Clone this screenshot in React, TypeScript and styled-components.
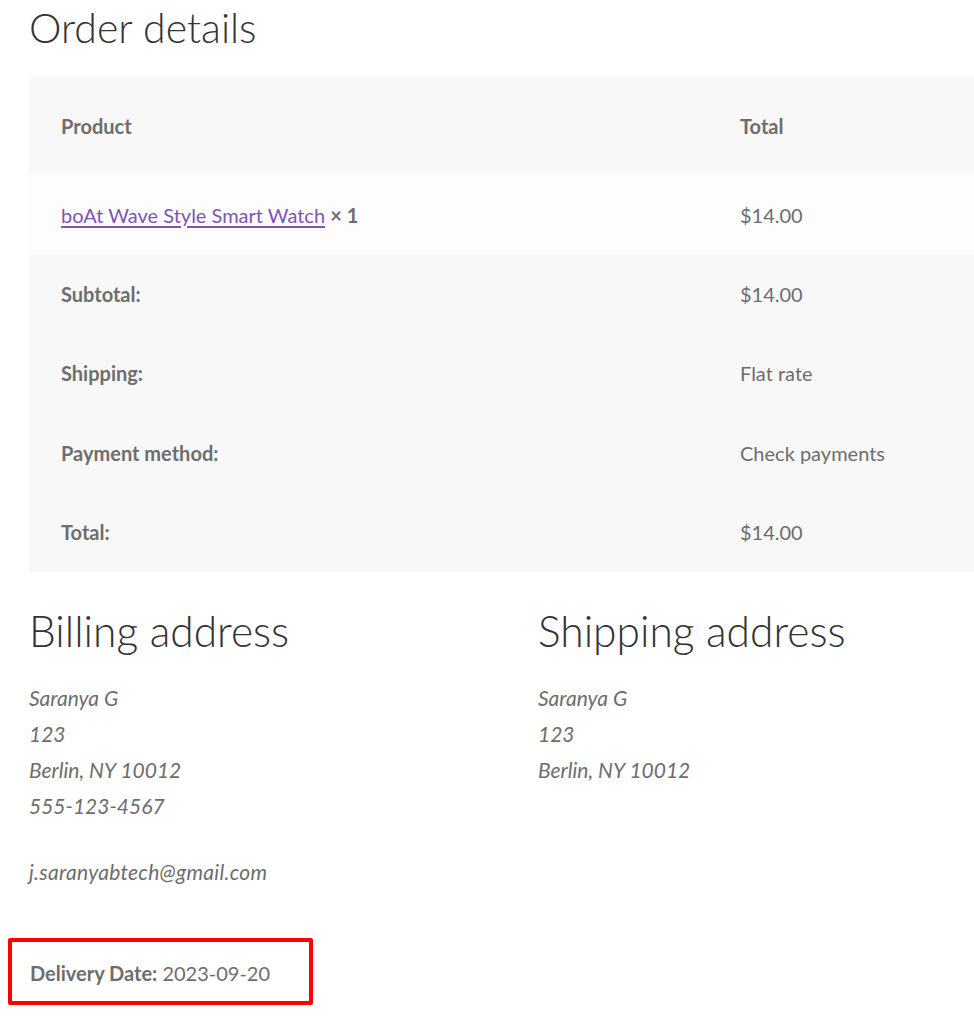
import { createGlobalStyle, styled } from 'styled-components';

const GlobalStyle = createGlobalStyle`
  body {
    margin: 0;
    background: #ffffff;
    font-family: Lato, "Noto Sans", sans-serif;
    color: #6d6d6d;
  }
`;

const Page = styled.div`
  padding-left: 29px;
  overflow: hidden;
`;

const Heading = styled.h2`
  margin: 3px 0 24px;
  font-size: 41px;
  line-height: 50px;
  font-weight: 300;
  color: #333333;
`;

const Table = styled.table`
  width: 100%;
  border-collapse: collapse;
  font-size: 20px;
  line-height: 36px;
  th, td {
    text-align: left;
    padding: 21.7px 32px;
    vertical-align: middle;
  }
  th {
    font-weight: 700;
  }
`;

const HeadRow = styled.tr`
  background: #f8f8f8;
  th {
    padding-top: 31px;
    padding-bottom: 31px;
  }
`;

const ItemRow = styled.tr`
  background: #fdfdfd;
`;

const FootRow = styled.tr`
  background: #f8f8f8;
`;

const ProductCell = styled.td`
  width: 615px;
`;

const ProductLink = styled.a`
  color: #7f54b3;
  text-decoration: underline;
  text-underline-offset: 3px;
`;

const Qty = styled.strong`
  font-weight: 700;
`;

const Addresses = styled.div`
  display: grid;
  grid-template-columns: 509px 1fr;
  margin-top: 34px;
`;

const AddressCol = styled.section``;

const SubHeading = styled.h2`
  margin: 0 0 24px;
  font-size: 42.5px;
  line-height: 50px;
  font-weight: 300;
  color: #333333;
`;

const Address = styled.address`
  font-size: 21px;
  line-height: 36px;
  font-style: italic;
`;

const Contact = styled.p`
  margin: 30px 0 0;
  font-size: 21px;
  line-height: 36px;
  font-style: italic;
  letter-spacing: 0.3px;
`;

const Highlight = styled.div`
  box-sizing: border-box;
  width: 305px;
  margin: 48px 0 0 -21px;
  padding: 13px 0 10px 18px;
  border: 4px solid #ff0000;
  border-radius: 2px;
`;

const DeliveryLine = styled.p`
  margin: 0;
  font-size: 20px;
  line-height: 36px;
  b {
    font-weight: 700;
  }
`;

const totals = [
  { label: 'Subtotal:', value: '$14.00' },
  { label: 'Shipping:', value: 'Flat rate' },
  { label: 'Payment method:', value: 'Check payments' },
  { label: 'Total:', value: '$14.00' },
];

export default function App() {
  return (
    <>
      <GlobalStyle />
      <Page>
        <Heading>Order details</Heading>
        <Table>
          <thead>
            <HeadRow>
              <th>Product</th>
              <th>Total</th>
            </HeadRow>
          </thead>
          <tbody>
            <ItemRow>
              <ProductCell>
                <ProductLink href="#">boAt Wave Style Smart Watch</ProductLink> <Qty>× 1</Qty>
              </ProductCell>
              <td>$14.00</td>
            </ItemRow>
          </tbody>
          <tfoot>
            {totals.map((row) => (
              <FootRow key={row.label}>
                <th>{row.label}</th>
                <td>{row.value}</td>
              </FootRow>
            ))}
          </tfoot>
        </Table>
        <Addresses>
          <AddressCol>
            <SubHeading>Billing address</SubHeading>
            <Address>
              Saranya G<br />
              123<br />
              Berlin, NY 10012
              <br />
              555-123-4567
              <Contact>j.saranyabtech@gmail.com</Contact>
            </Address>
          </AddressCol>
          <AddressCol>
            <SubHeading>Shipping address</SubHeading>
            <Address>
              Saranya G<br />
              123<br />
              Berlin, NY 10012
            </Address>
          </AddressCol>
        </Addresses>
        <Highlight>
          <DeliveryLine>
            <b>Delivery Date:</b> 2023-09-20
          </DeliveryLine>
        </Highlight>
      </Page>
    </>
  );
}
